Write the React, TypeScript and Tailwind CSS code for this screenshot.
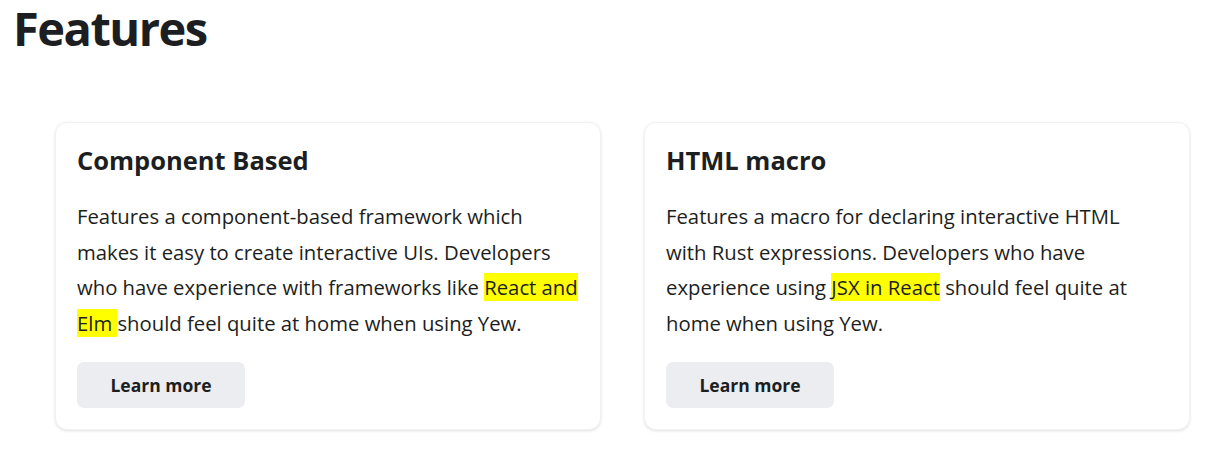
import React from "react";

const font = { fontFamily: '"Open Sans", "Liberation Sans", sans-serif' };

function Card({ title, children }: { title: string; children: React.ReactNode }) {
  return (
    <div className="w-[546px] rounded-[12px] border border-[#f2f2f2] bg-white px-[21px] pb-[21px] pt-[22px] shadow-[0_1px_3px_0_rgba(0,0,0,0.12)]">
      <h3 className="text-[25.5px] font-bold leading-[30px] text-[#1c1e21]">{title}</h3>
      <p className="mt-[24px] whitespace-nowrap text-[20.3px] leading-[35.67px] text-[#1c1e21]">{children}</p>
      <button className="mt-[20px] h-[46px] w-[168px] rounded-[7px] bg-[#ebedf0] text-[17.5px] font-bold text-[#1c1e21]">
        Learn more
      </button>
    </div>
  );
}

function Mark({ children }: { children: React.ReactNode }) {
  return <span className="bg-[#ffff00] [box-decoration-break:clone]">{children}</span>;
}

export default function App() {
  return (
    <div className="min-h-[450px] w-[1217px] bg-white text-[#1c1e21]" style={font}>
      <h1 className="pl-[13px] text-[47px] font-bold leading-[56px] tracking-[-1.5px]">Features</h1>
      <div className="mt-[66px] flex gap-[43px] pl-[55px]">
        <Card title="Component Based">
          Features a component-based framework which
          <br />
          makes it easy to create interactive UIs. Developers
          <br />
          who have experience with frameworks like <Mark>React and</Mark>
          <br />
          <Mark>Elm </Mark>should feel quite at home when using Yew.
        </Card>
        <Card title="HTML macro">
          Features a macro for declaring interactive HTML
          <br />
          with Rust expressions. Developers who have
          <br />
          experience using <Mark>JSX in React</Mark> should feel quite at
          <br />
          home when using Yew.
        </Card>
      </div>
    </div>
  );
}
